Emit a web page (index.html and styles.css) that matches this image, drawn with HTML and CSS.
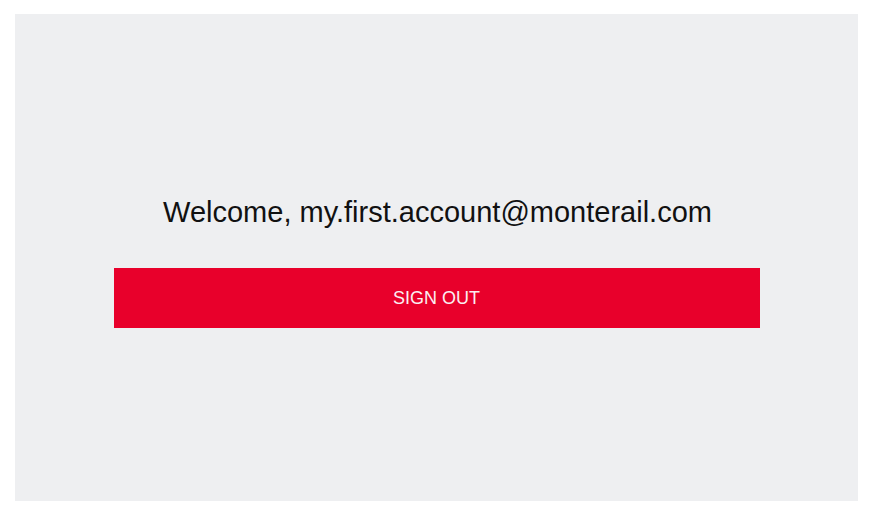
FILE: index.html
```html
<!DOCTYPE html>
<html>
<head>
<meta charset="utf-8">
<link rel="stylesheet" href="styles.css">
</head>
<body>
<div class="page">
  <main class="panel">
    <h1 class="welcome">Welcome, my.first.account@monterail.com</h1>
    <button class="signout">SIGN OUT</button>
  </main>
</div>
</body>
</html>
```
FILE: styles.css
```css
html, body {
  margin: 0;
  padding: 0;
  background: #ffffff;
}
.page {
  width: 871px;
  height: 517px;
  padding: 14px 13px 16px 15px;
  box-sizing: border-box;
}
.panel {
  width: 843px;
  height: 487px;
  background: #eeeff1;
  display: flex;
  flex-direction: column;
  align-items: center;
  padding-top: 181px;
  box-sizing: border-box;
}
.welcome {
  margin: 0 0 0 2px;
  font-family: "Liberation Sans", Arial, sans-serif;
  font-weight: normal;
  font-size: 29px;
  line-height: 34px;
  color: #111111;
}
.signout {
  margin-top: 39px;
  width: 646px;
  height: 60px;
  border: none;
  background: #e8002b;
  color: #fbeef1;
  font-family: "Liberation Sans", Arial, sans-serif;
  font-size: 18px;
  padding: 0;
  cursor: pointer;
}
```
